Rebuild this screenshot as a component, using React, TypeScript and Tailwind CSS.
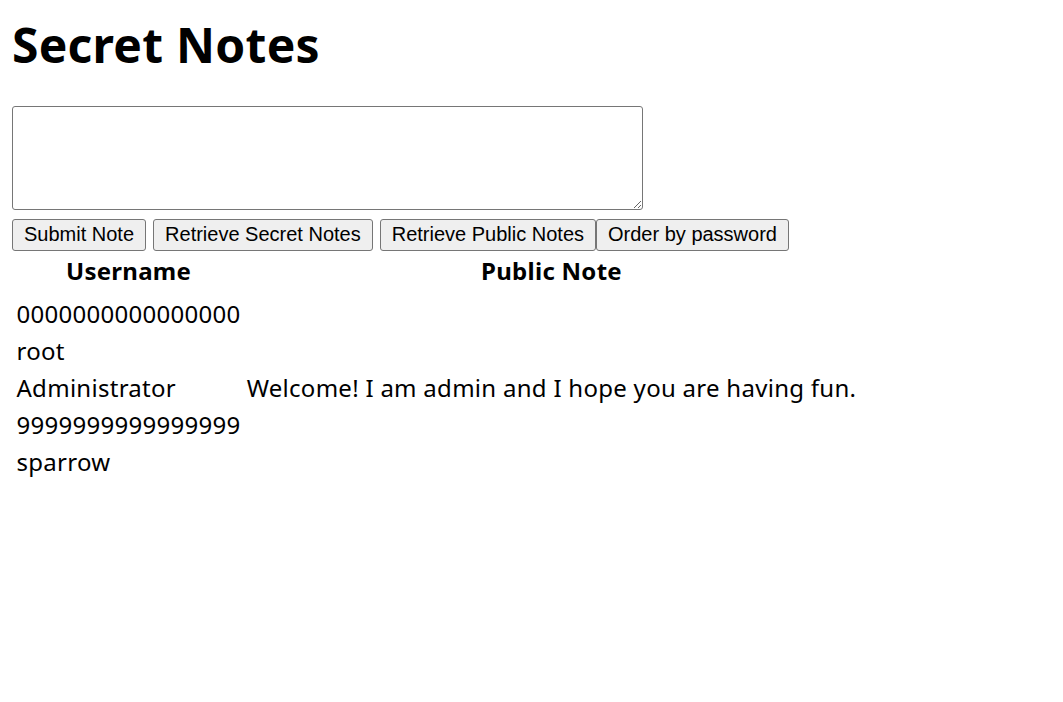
import React from 'react';

const users = [
  { name: '0000000000000000', note: '' },
  { name: 'root', note: '' },
  { name: 'Administrator', note: 'Welcome! I am admin and I hope you are having fun.' },
  { name: '9999999999999999', note: '' },
  { name: 'sparrow', note: '' },
];

const buttons = ['Submit Note', 'Retrieve Secret Notes', 'Retrieve Public Notes'];

export default function App() {
  return (
    <div className="min-h-screen bg-white px-[12px] pt-[12px] font-['Noto_Sans',sans-serif] text-black">
      <h1 className="text-[48px] font-bold leading-[65px] tracking-[0.25px]">Secret Notes</h1>

      <textarea className="mt-[29px] block h-[104px] w-[631px] resize rounded-[3px] border border-[#767676] bg-white" />

      {/* Botones */}
      <div className="mt-[9px] flex font-['Liberation_Sans',Arial,sans-serif] text-[20px]">
        {buttons.map((b) => (
          <button
            key={b}
            className="mr-[7px] h-[32px] rounded-[3px] border border-[#767676] bg-[#efefef] px-[11px] pb-[2px] leading-[28px]"
          >
            {b}
          </button>
        ))}
        <button className="-ml-[7px] h-[32px] rounded-[3px] border border-[#767676] bg-[#efefef] px-[11px] pb-[2px] leading-[28px]">
          Order by password
        </button>
      </div>

      <table className="border-separate border-spacing-[3px] text-[24px] tracking-[0.28px]">
        <thead>
          <tr>
            <th className="px-[1.5px] pt-[1px] pb-[7px] text-center font-bold leading-[32px]">Username</th>
            <th className="px-[1.5px] pt-[1px] pb-[7px] text-center font-bold leading-[32px]">Public Note</th>
          </tr>
        </thead>
        <tbody>
          {users.map((u) => (
            <tr key={u.name}>
              <td className="px-[1.5px] py-[1px] leading-[32px]">{u.name}</td>
              <td className="px-[1.5px] py-[1px] leading-[32px]">{u.note}</td>
            </tr>
          ))}
        </tbody>
      </table>
    </div>
  );
}
